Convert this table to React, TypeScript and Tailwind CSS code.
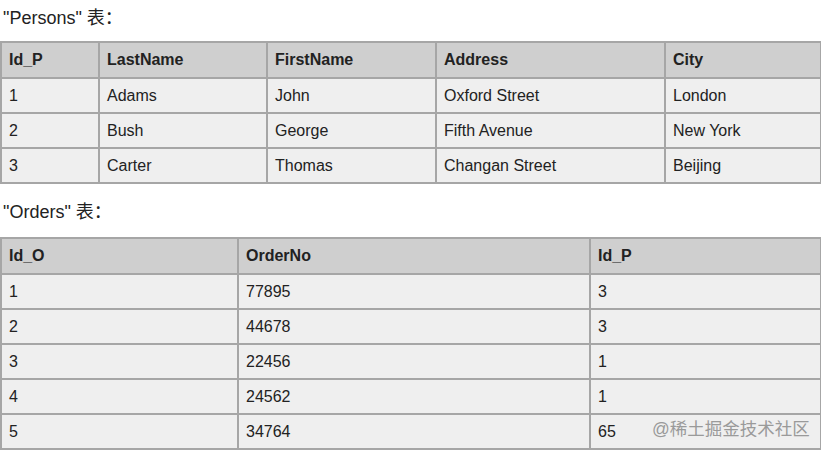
import React from 'react';

const persons = [
  ['1', 'Adams', 'John', 'Oxford Street', 'London'],
  ['2', 'Bush', 'George', 'Fifth Avenue', 'New York'],
  ['3', 'Carter', 'Thomas', 'Changan Street', 'Beijing'],
];

const orders = [
  ['1', '77895', '3'],
  ['2', '44678', '3'],
  ['3', '22456', '1'],
  ['4', '24562', '1'],
  ['5', '34764', '65'],
];

type TableProps = {
  head: string[];
  rows: string[][];
  widths: number[];
};

const DataTable: React.FC<TableProps> = ({ head, rows, widths }) => (
  <table className="border-collapse table-fixed w-[820px] text-[16px] text-[#222]">
    <colgroup>
      {widths.map((w, i) => (
        <col key={i} style={{ width: w }} />
      ))}
    </colgroup>
    <thead>
      <tr className="bg-[#cfcfcf]">
        {head.map((h) => (
          <th key={h} className="h-[36px] border-2 border-[#a6a6a6] pl-[7px] text-left font-bold align-middle">
            {h}
          </th>
        ))}
      </tr>
    </thead>
    <tbody>
      {rows.map((r, i) => (
        <tr key={i} className="bg-[#efefef]">
          {r.map((c, j) => (
            <td key={j} className="h-[35px] border-2 border-[#a6a6a6] pl-[7px] align-middle">
              {c}
            </td>
          ))}
        </tr>
      ))}
    </tbody>
  </table>
);

export default function App() {
  return (
    <div className="relative w-[821px] h-[452px] bg-white overflow-hidden font-['Liberation_Sans','Noto_Sans_CJK_SC',sans-serif]">
      <div className="pt-[7px]">
        <p className="pl-[3px] text-[18px] leading-[22px] text-[#222] mb-[12px]">"Persons" 表：</p>
        <DataTable head={['Id_P', 'LastName', 'FirstName', 'Address', 'City']} rows={persons} widths={[98, 168, 169, 229, 156]} />
        <p className="pl-[3px] text-[18px] leading-[22px] text-[#222] mt-[17px] mb-[14px]">"Orders" 表：</p>
        <DataTable head={['Id_O', 'OrderNo', 'Id_P']} rows={orders} widths={[237, 352, 231]} />
      </div>
      <div className="absolute left-[652px] top-[416px] text-[17.5px] text-[#9a9a9a]">@稀土掘金技术社区</div>
    </div>
  );
}
